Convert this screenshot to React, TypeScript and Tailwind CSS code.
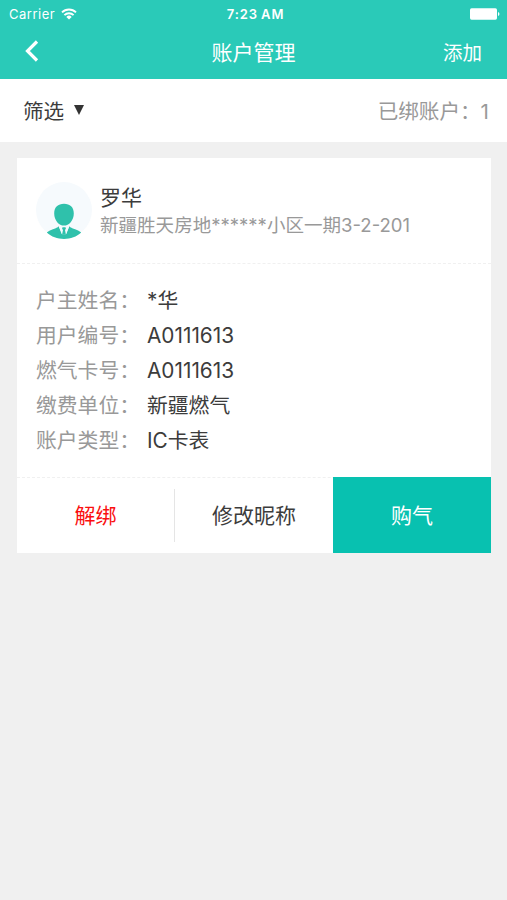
import clsx from "clsx";

type Detail = {
  label: string;
  value: string;
};

const details: Detail[] = [
  { label: "户主姓名：", value: "*华" },
  { label: "用户编号：", value: "A0111613" },
  { label: "燃气卡号：", value: "A0111613" },
  { label: "缴费单位：", value: "新疆燃气" },
  { label: "账户类型：", value: "IC卡表" },
];

const WifiIcon = () => (
  <svg width="16" height="12" viewBox="0 0 16 12" className="-mt-px ml-1.5">
    <g fill="none" stroke="#fff" strokeWidth="1.9">
      <path d="M1 4.4a10 10 0 0 1 14 0" />
      <path d="M3.4 7.2a6.5 6.5 0 0 1 9.2 0" />
    </g>
    <path d="M8 11.6 5.3 8.9a3.8 3.8 0 0 1 5.4 0z" fill="#fff" />
  </svg>
);

const BatteryIcon = () => (
  <svg width="30" height="12" viewBox="0 0 30 12">
    <rect x="0" y="0.3" width="27" height="11.4" rx="1.6" fill="#fff" />
    <path d="M28 4v4a2.1 2.1 0 0 0 0-4z" fill="#fff" />
  </svg>
);

const Avatar = () => (
  <svg width="56" height="58" viewBox="0 0 56 58" className="shrink-0">
    <circle cx="28" cy="28" r="28" fill="#f6fafd" />
    <g fill="#2fc1ab">
      <path d="M28 21.8c6 0 9.8 3.4 9.8 9.6 0 6.8-4.8 12.2-9.8 12.2s-9.8-5.4-9.8-12.2c0-6.2 3.8-9.6 9.8-9.6z" />
      {/* shoulders */}
      <path d="M22.6 44.2 25.8 52h4.4l3.2-7.8c1 1.4 2.8 2 5 2.7 2.6.8 5 1.9 6.8 3.6C40.6 54.8 34.6 56.9 28 56.9s-12.6-2.1-17.2-6.4c1.8-1.7 4.2-2.8 6.8-3.6 2.2-.7 4-1.3 5-2.7z" />
    </g>
    {/* shirt and tie */}
    <path d="M23 44.4 26 52.200h4l3-7.800-2.800.5h-4.400z" fill="#f6fafd" />
    <path
      d="M26.5 45.2h3l.4 1.5-.9 1.3.9 4.5h-3.8l.9-4.5-.9-1.300z"
      fill="#2fc1ab"
    />
  </svg>
);

const App = () => {
  return (
    <div className="h-[900px] w-[507px] overflow-hidden bg-[#f0f0f0] font-['Inter','Noto_Sans_CJK_SC',sans-serif] text-[#3c3c3c]">
      {/* Header */}
      <header className="h-[79px] bg-[#2acab8] text-white">
        <div className="grid h-[28px] grid-cols-3 items-center pr-[7px] pl-[9px] text-[13px] leading-none">
          <div className="flex items-center tracking-[0.5px]">
            Carrier
            <WifiIcon />
          </div>
          <span className="pl-0.5 text-center font-semibold tracking-[0.9px] [word-spacing:-1px]">
            7:23 AM
          </span>
          <div className="flex justify-end">
            <BatteryIcon />
          </div>
        </div>
        <div className="grid h-[49px] grid-cols-3 items-center px-[25px]">
          <svg width="14" height="22" viewBox="0 0 14 22" className="-mt-1">
            <path
              d="M12 1.5 2.5 11l9.5 9.5"
              fill="none"
              stroke="#fff"
              strokeWidth="3.2"
            />
          </svg>
          <h1 className="text-center text-[21px] leading-none">账户管理</h1>
          <span className="pt-0.5 text-right text-[19.5px] leading-none">
            添加
          </span>
        </div>
      </header>

      {/* Filter bar */}
      <div className="flex h-[63px] items-center justify-between bg-white pt-[3px] pr-[18px] pl-[23px] text-[20.6px] leading-none">
        <div className="flex items-center gap-[10px]">
          筛选
          <svg width="10" height="10" viewBox="0 0 10 10" className="-mt-1">
            <path d="M0 0h10L5 10z" fill="#333" />
          </svg>
        </div>
        <span className="text-[#999]">已绑账户：1</span>
      </div>

      {/* Account card */}
      <div className="mt-4 mr-4 ml-[17px] h-[395px] bg-white">
        <div className="flex h-[106px] items-center gap-2 border-b border-dashed border-[#f0f0f0] pl-[19px]">
          <Avatar />
          <div className="flex flex-col gap-2">
            <p className="text-[21px] leading-[21px]">罗华</p>
            <p className="-mt-px text-[18.55px] leading-[20px] text-[#999]">
              新疆胜天房地******小区一期3-2-201
            </p>
          </div>
        </div>

        <dl className="flex h-[213px] flex-col pt-5 pl-[19px] text-[20.8px] leading-[34.9px]">
          {details.map(({ label, value }) => (
            <div key={label} className="flex">
              <dt className="w-[111px] shrink-0 text-[#999]">{label}</dt>
              <dd>{value}</dd>
            </div>
          ))}
        </dl>

        <div className="grid h-[76px] grid-cols-3 border-t border-dashed border-[#f0f0f0] text-[21px] leading-none">
          {["解绑", "修改昵称", "购气"].map((text, i) => (
            <button
              key={text}
              className={clsx(
                "flex items-center justify-center",
                i === 0 &&
                  "my-[11px] border-r border-solid border-[#e5e5e5] text-[#fa0f0f]",
                i === 2 && "-mt-px bg-[#08c1b0] pt-px text-white"
              )}
            >
              {text}
            </button>
          ))}
        </div>
      </div>
    </div>
  );
};

export default App;
